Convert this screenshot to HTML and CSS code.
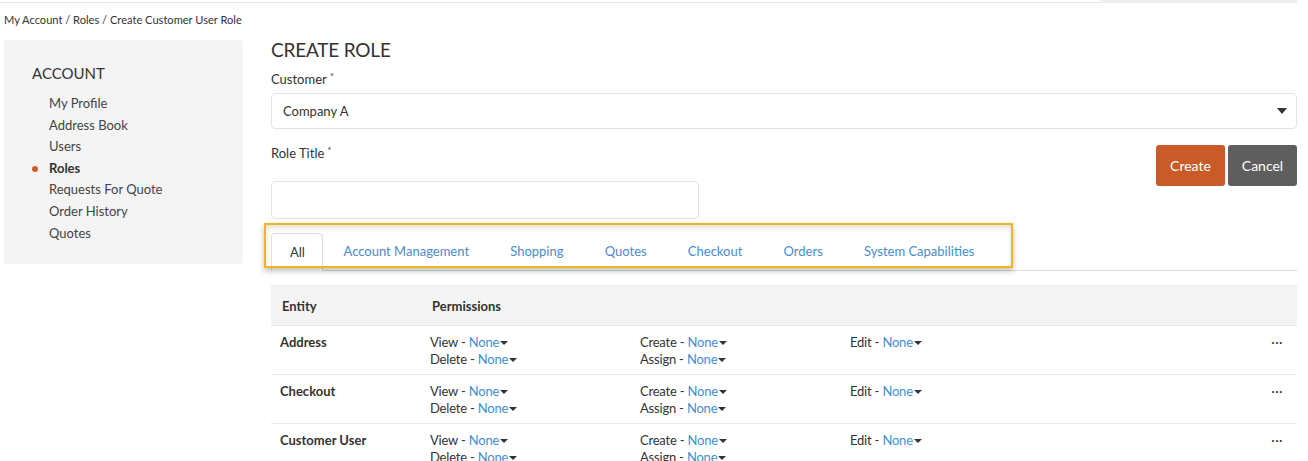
FILE: index.html
```html
<!DOCTYPE html>
<html>
<head>
<meta charset="utf-8">
<link rel="stylesheet" href="styles.css">
</head>
<body>
<div class="topbar"><div class="topbar-fill"></div><div class="topbar-tab"></div></div>
<div class="breadcrumb">My Account / Roles / Create Customer User Role</div>
<div class="layout">
  <aside class="sidebar">
    <div class="side-title">ACCOUNT</div>
    <ul class="side-list">
      <li>My Profile</li>
      <li>Address Book</li>
      <li>Users</li>
      <li class="active">Roles</li>
      <li>Requests For Quote</li>
      <li>Order History</li>
      <li>Quotes</li>
    </ul>
  </aside>
  <main class="main">
    <h1 class="title">CREATE ROLE</h1>
    <div class="label">Customer<span class="req">*</span></div>
    <div class="select"><span>Company A</span><span class="select-caret"></span></div>
    <div class="role-row">
      <div class="role-left">
        <div class="label">Role Title<span class="req">*</span></div>
        <div class="input"></div>
      </div>
      <div class="buttons">
        <button class="btn btn-create">Create</button>
        <button class="btn btn-cancel">Cancel</button>
      </div>
    </div>
    <div class="tabs">
      <div class="tab tab-active">All</div>
      <div class="tab">Account Management</div>
      <div class="tab">Shopping</div>
      <div class="tab">Quotes</div>
      <div class="tab">Checkout</div>
      <div class="tab">Orders</div>
      <div class="tab">System Capabilities</div>
      <div class="highlight"></div>
    </div>
    <div class="table">
      <div class="thead">
        <div class="c-entity">Entity</div>
        <div class="c-perm">Permissions</div>
      </div>
      <div class="row">
        <div class="c-entity ent">Address</div>
        <div class="perms">
          <div class="p">View - <span class="v">None</span><span class="caret"></span></div>
          <div class="p">Create - <span class="v">None</span><span class="caret"></span></div>
          <div class="p">Edit - <span class="v">None</span><span class="caret"></span></div>
          <div class="p">Delete - <span class="v">None</span><span class="caret"></span></div>
          <div class="p">Assign - <span class="v">None</span><span class="caret"></span></div>
        </div>
        <div class="more">&middot;&middot;&middot;</div>
      </div>
      <div class="row">
        <div class="c-entity ent">Checkout</div>
        <div class="perms">
          <div class="p">View - <span class="v">None</span><span class="caret"></span></div>
          <div class="p">Create - <span class="v">None</span><span class="caret"></span></div>
          <div class="p">Edit - <span class="v">None</span><span class="caret"></span></div>
          <div class="p">Delete - <span class="v">None</span><span class="caret"></span></div>
          <div class="p">Assign - <span class="v">None</span><span class="caret"></span></div>
        </div>
        <div class="more">&middot;&middot;&middot;</div>
      </div>
      <div class="row">
        <div class="c-entity ent">Customer User</div>
        <div class="perms">
          <div class="p">View - <span class="v">None</span><span class="caret"></span></div>
          <div class="p">Create - <span class="v">None</span><span class="caret"></span></div>
          <div class="p">Edit - <span class="v">None</span><span class="caret"></span></div>
          <div class="p">Delete - <span class="v">None</span><span class="caret"></span></div>
          <div class="p">Assign - <span class="v">None</span><span class="caret"></span></div>
        </div>
        <div class="more">&middot;&middot;&middot;</div>
      </div>
    </div>
  </main>
</div>
</body>
</html>
```
FILE: styles.css
```css
* { box-sizing: border-box; }
html, body { margin: 0; padding: 0; background: #fff; overflow: hidden; }
body { font-family: Lato, "Open Sans", sans-serif; color: #333; font-size: 13px; }

.topbar { display: flex; height: 3px; }
.topbar-fill { flex: 0 0 1101px; border-bottom: 1px solid #e6e6e6; height: 3px; }
.topbar-tab { flex: 0 0 196px; background: #eeeeee; height: 3px; }

.breadcrumb { font-size: 11.1px; line-height: 14px; padding: 10px 0 0 4px; color: #333; height: 37px; }

.layout { display: flex; align-items: flex-start; }

.sidebar { margin-left: 4px; width: 239px; background: #f4f4f4; border-radius: 3px; padding: 23px 0 20px 28px; }
.side-title { font-size: 15px; line-height: 20px; color: #333; }
.side-list { list-style: none; margin: 10px 0 0 0; padding: 0 0 0 17px; }
.side-list li { font-size: 13px; line-height: 21.6px; color: #444; position: relative; }
.side-list li.active { font-weight: bold; color: #333; }
.side-list li.active::before { content: ""; position: absolute; left: -17px; top: 8px; width: 6px; height: 6px; border-radius: 50%; background: #cf5d2a; }

.main { margin-left: 28px; width: 1026px; }
.title { font-size: 19px; font-weight: normal; line-height: 20px; margin: 0; color: #333; letter-spacing: -0.2px; }
.label { font-size: 13px; line-height: 18px; margin-top: 10px; color: #333; }
.req { font-size: 10px; position: relative; top: -4px; color: #444; margin-left: 3px; }
.select { margin-top: 4px; height: 36px; border: 1px solid #e3e3e3; border-radius: 4px; display: flex; align-items: center; justify-content: space-between; padding: 0 9px 0 11px; font-size: 13px; color: #333; }
.select-caret { width: 0; height: 0; border-left: 5px solid transparent; border-right: 5px solid transparent; border-top: 6px solid #333; }

.role-row { display: flex; justify-content: space-between; align-items: flex-start; margin-top: 6px; }
.role-left { width: 428px; }
.role-left .label { margin-top: 9px; }
.input { margin-top: 18px; height: 38px; border: 1px solid #e3e3e3; border-radius: 4px; }
.buttons { display: flex; gap: 3px; margin-top: 10px; }
.btn { border: none; height: 41px; width: 69px; border-radius: 3px; color: #fff; font-family: Lato, sans-serif; font-size: 14px; padding: 0; }
.btn-create { background: #c95b28; }
.btn-cancel { background: #5e5e5e; }

.tabs { position: relative; display: flex; margin-top: 14px; border-bottom: 1px solid #dcdcdc; height: 38px; }
.tab { height: 37px; line-height: 36px; padding: 0 20.6px; font-size: 13px; color: #4a8ccb; white-space: nowrap; }
.tab-active { padding: 0 17px 0 18px; color: #333; border: 1px solid #ddd; border-bottom: 1px solid #fff; border-radius: 4px 4px 0 0; height: 38px; background: #fff; }
.highlight { position: absolute; left: -7px; top: -10px; width: 749px; height: 45px; border: 2px solid #f1b522; box-shadow: 0 3px 6px rgba(0,0,0,0.25), inset 0 3px 5px rgba(0,0,0,0.12); pointer-events: none; }

.table { margin-top: 14px; }
.thead { display: flex; align-items: center; height: 41px; background: #f4f4f4; border-top: 1px solid #ececec; border-bottom: 1px solid #e6e6e6; font-weight: bold; font-size: 13px; color: #333; }
.thead .c-entity { width: 161px; padding-left: 11px; }
.row { display: flex; align-items: flex-start; height: 49px; border-bottom: 1px solid #e8e8e8; padding-top: 8px; }
.row .c-entity { width: 159px; padding-left: 9px; }
.ent { font-weight: bold; font-size: 13px; line-height: 17px; color: #333; }
.perms { display: grid; grid-template-columns: 210px 210px 210px; width: 630px; }
.p { font-size: 13px; line-height: 17px; color: #333; letter-spacing: -0.2px; white-space: nowrap; }
.v { color: #3f8fd2; }
.caret { display: inline-block; width: 0; height: 0; border-left: 4px solid transparent; border-right: 4px solid transparent; border-top: 4px solid #333; margin-left: 1px; vertical-align: 2px; }
.more { margin-left: auto; margin-right: 14px; font-size: 13px; line-height: 17px; letter-spacing: 0.5px; color: #333; }
```
